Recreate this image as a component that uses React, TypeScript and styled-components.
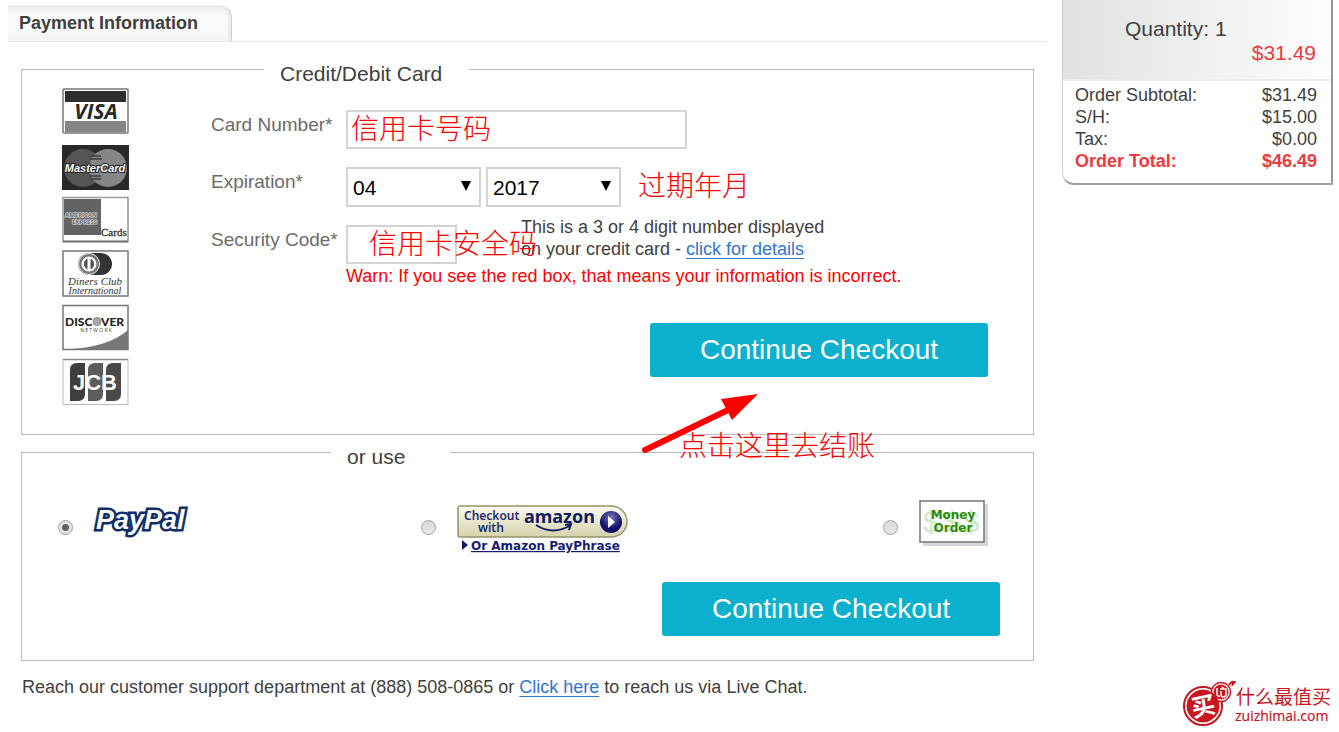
import React from "react";
import styled, { createGlobalStyle } from "styled-components";

const GlobalStyle = createGlobalStyle`
  *, *::before, *::after { box-sizing: border-box; }
  body {
    margin: 0;
    background: #fff;
    color: #3f3f3f;
    font-family: "Liberation Sans", Arial, "Noto Sans CJK SC", sans-serif;
    font-size: 18px;
    line-height: 22px;
  }
`;

const Columns = styled.div`
  display: flex;
  align-items: flex-start;
  gap: 15px;
  padding: 0 6px 0 8px;
`;

const Main = styled.main`
  flex: 1;
  min-width: 0;
`;

const TabBar = styled.header`
  padding-top: 5px;
  border-bottom: 1px solid #e8e8e8;
`;

const Tab = styled.h1`
  display: inline-block;
  vertical-align: top;
  margin: 0;
  padding: 7px 33px 7px 11px;
  border-top: 1px solid #ececec;
  border-right: 1px solid #d4d4d4;
  border-top-right-radius: 12px;
  background: linear-gradient(#efefef, #fafafa 30%, #fafafa 70%, #f4f4f4);
  box-shadow: inset -2px 1px 3px #e4e4e4;
  font-size: 18px;
  line-height: 21px;
`;

const Box = styled.fieldset<{ $top: number; $bottom: number }>`
  min-width: 0;
  margin: 0 13px;
  padding: ${(p) => p.$top}px 33px ${(p) => p.$bottom}px 40px;
  border: 1px solid #bcbcbc;
`;

const FirstBox = styled(Box)`
  margin-top: 10px;
  padding-right: 45px;
`;

const Legend = styled.legend<{ $offset: number; $end: number }>`
  margin-left: ${(p) => p.$offset}px;
  padding: 10px ${(p) => p.$end}px 0 16px;
  font-size: 21px;
  line-height: 24px;
`;

const CardLayout = styled.div`
  display: flex;
  gap: 82px;
`;

const CardList = styled.div`
  display: flex;
  flex-direction: column;
  gap: 6px;
  svg { display: block; }
`;

const Form = styled.form`
  flex: 1;
  min-width: 0;
  padding-top: 22px;
`;

const Row = styled.div`
  display: flex;
  align-items: flex-start;
  margin-bottom: 18px;
`;

const LastRow = styled(Row)`
  height: 40px;
  margin-bottom: 0;
`;

const Label = styled.label`
  flex: none;
  width: 135px;
  color: #6b6b6b;
  font-size: 19px;
  line-height: 30px;
  white-space: nowrap;
`;

const Field = styled.div<{ $width: number }>`
  position: relative;
  flex: none;
  width: ${(p) => p.$width}px;
`;

const TextBox = styled.input`
  display: block;
  width: 100%;
  height: 39px;
  padding: 0 8px;
  border: 2px solid #d4d4d4;
  font: inherit;
`;

const SelectField = styled(Field)`
  margin-right: 5px;
  svg {
    position: absolute;
    top: 14px;
    right: 10px;
    pointer-events: none;
  }
`;

const Select = styled.select`
  display: block;
  width: 100%;
  height: 40px;
  padding: 0 5px;
  border: 2px solid #d4d4d4;
  border-radius: 0;
  appearance: none;
  background: #fff;
  color: #000;
  font-family: inherit;
  font-size: 21px;
`;

const Note = styled.span`
  color: #f00;
  font-size: 28px;
  font-weight: 300;
  line-height: 40px;
  white-space: nowrap;
`;

const FloatingNote = styled(Note)<{ $left: number; $top: number }>`
  position: absolute;
  left: ${(p) => p.$left}px;
  top: ${(p) => p.$top}px;
  pointer-events: none;
`;

const SideNote = styled(Note)`
  height: 40px;
  margin-left: 12px;
`;

const Hint = styled.p`
  margin: -9px 0 0 64px;
`;

const Link = styled.a`
  color: #2f76d2;
  text-underline-offset: 3px;
`;

const Warning = styled.p`
  margin: 0 0 0 135px;
  color: #f00;
`;

const Actions = styled.div<{ $gap: number }>`
  display: flex;
  justify-content: flex-end;
  margin-top: ${(p) => p.$gap}px;
`;

const ButtonWrap = styled.div`
  position: relative;
`;

const CheckoutButton = styled.button`
  display: block;
  width: 338px;
  height: 54px;
  padding: 0;
  border: 0;
  border-radius: 3px;
  background: #0bb0ce;
  color: #fff;
  font-family: inherit;
  font-size: 28px;
`;

const Arrow = styled.svg`
  position: absolute;
  left: -10px;
  top: 67px;
  pointer-events: none;
`;

const Methods = styled.div`
  display: grid;
  grid-template-columns: 363fr 462fr 149fr;
  margin: 0 -32px 0 -4px;
`;

const Method = styled.label<{ $gap: number }>`
  display: flex;
  align-items: center;
  gap: ${(p) => p.$gap}px;
`;

const Radio = styled.input`
  flex: none;
  width: 15px;
  height: 15px;
  margin: 0;
  border: 1px solid #a2a2a2;
  border-radius: 50%;
  appearance: none;
  background: linear-gradient(#d8d8d8, #e8e8e8);
  &:checked {
    background: radial-gradient(circle, #606060 0 3px, #e2e2e2 4px);
  }
`;

const Summary = styled.aside`
  flex: none;
  width: 271px;
  border-left: 1px solid #cfd1d1;
  border-right: 2px solid #969696;
  border-bottom: 2px solid #a0a0a0;
  border-bottom-left-radius: 12px;
`;

const Quantity = styled.div`
  padding: 17px 15px 14px 62px;
  border-bottom: 2px solid #ececec;
  background: linear-gradient(90deg, #e0e2e2, #fdfdfd);
  font-size: 21px;
  line-height: 24px;
`;

const ItemPrice = styled.div`
  color: #ee3a3e;
  text-align: right;
`;

const Totals = styled.table`
  width: 100%;
  border-collapse: collapse;
  margin: 3px 0 11px;
  th, td { padding: 0 14px 0 12px; font-weight: inherit; line-height: 22px; }
  th { text-align: left; }
  td { text-align: right; }
`;

const TotalRow = styled.tr<{ $strong?: boolean }>`
  color: ${(p) => (p.$strong ? "#ee3a3e" : "inherit")};
  font-weight: ${(p) => (p.$strong ? 700 : 400)};
`;

const Footer = styled.footer`
  display: flex;
  justify-content: space-between;
  margin-top: 14px;
  padding: 0 7px 0 22px;
  svg { flex: none; margin-top: 3px; }
`;

const Support = styled.p`
  margin: 0;
  line-height: 24px;
`;

const sans = '"Open Sans", "Noto Sans", sans-serif';

const Visa = () => (
  <svg width="67" height="48" role="img" aria-label="Visa">
    <rect x="1" y="1" width="65" height="44" rx="1" fill="#fff" stroke="#777" strokeWidth="1.5" />
    <rect x="3" y="3" width="61" height="11" fill="#2e2c2e" />
    <rect x="3" y="33" width="61" height="11" fill="#858585" />
    <text x="34" y="31" textAnchor="middle" fontFamily={sans} fontSize="21" fontWeight="700" fontStyle="italic" fill="#292929">VISA</text>
  </svg>
);

const MasterCard = () => (
  <svg width="67" height="48" role="img" aria-label="MasterCard">
    <rect x="0" y="3" width="67" height="45" fill="#292929" />
    <circle cx="21" cy="26" r="19" fill="#555" />
    <circle cx="46" cy="26" r="19" fill="#868686" />
    <path d="M29 14h10M28 17h12M27 34h12M29 37h10" stroke="#3c3c3c" strokeWidth="1.5" />
    <text x="33" y="30" textAnchor="middle" fontFamily='"Liberation Sans", sans-serif' fontSize="11" fontWeight="700" fontStyle="italic" fill="#fff" stroke="#222" strokeWidth="2" paintOrder="stroke">MasterCard</text>
  </svg>
);

const Amex = () => (
  <svg width="67" height="48" role="img" aria-label="American Express Cards">
    <rect x="1" y="1.5" width="65" height="44" fill="#fff" stroke="#999" strokeWidth="1.5" />
    <path d="M1 45.5h65" stroke="#777" strokeWidth="2" />
    <rect x="2" y="3" width="37" height="36" fill="#636363" />
    <g fontFamily={sans} fontWeight="700" fontSize="6" fill="#666" stroke="#e0e0e0" strokeWidth="1.2" paintOrder="stroke">
      <text x="3" y="21">AMERICAN</text>
      <text x="10" y="28">EXPRESS</text>
    </g>
    <text x="39" y="40" fontFamily="Liberation Serif, serif" fontSize="11" fill="#333" stroke="#333" strokeWidth=".3">Cards</text>
  </svg>
);

const Diners = () => (
  <svg width="67" height="48" role="img" aria-label="Diners Club International">
    <rect x="1" y="1" width="65" height="45" fill="#fff" stroke="#777" strokeWidth="1.5" />
    <rect x="16" y="3" width="34" height="22" rx="11" fill="#333" />
    <circle cx="27" cy="14" r="10.5" fill="#777" stroke="#eee" />
    <circle cx="27" cy="14" r="7.5" fill="#fff" />
    <path d="M25.500 8.500a6 6 0 0 0 0 11zM28.500 8.500a6 6 0 0 1 0 11z" fill="#555" />
    <g fontFamily="Liberation Serif, serif" fontStyle="italic" textAnchor="middle" fill="#333">
      <text x="33" y="35" fontSize="11">Diners Club</text>
      <text x="33" y="44" fontSize="10">International</text>
    </g>
  </svg>
);

const Discover = () => (
  <svg width="67" height="48" role="img" aria-label="Discover Network">
    <rect x="1" y="1.5" width="65" height="44" fill="#fff" stroke="#777" strokeWidth="1.5" />
    <path d="M9 45Q46 43 66 26v19z" fill="#777" />
    <g fontFamily="Lato, sans-serif" fontWeight="900" fontSize="12" fill="#252525">
      <text x="3" y="22">DISC</text>
      <text x="39" y="22">VER</text>
    </g>
    <circle cx="35" cy="17.5" r="4" fill="#aaa" stroke="#888" />
    <text x="34" y="28" textAnchor="middle" fontFamily={sans} fontSize="5" fill="#444">N E T W O R K</text>
  </svg>
);

const Jcb = () => (
  <svg width="67" height="48" role="img" aria-label="JCB">
    <rect x="1" y="1.5" width="65" height="45" fill="#fff" stroke="#bbb" />
    <path d="M1 1.5h65" stroke="#888" strokeWidth="1.5" />
    <path d="M8 12q0-7 7-7h8v31q0 7-7 7H8z" fill="#3e3e3e" />
    <path d="M26 12q0-7 7-7h8v31q0 7-7 7h-8z" fill="#5c5c5c" />
    <path d="M44 12q0-7 7-7h8v31q0 7-7 7h-8z" fill="#4a4a4a" />
    <text x="33" y="32" textAnchor="middle" fontFamily="Liberation Sans, sans-serif" fontSize="22" fontWeight="700" fill="#fff">JCB</text>
  </svg>
);

const PayPal = () => (
  <svg width="96" height="54" role="img" aria-label="PayPal">
    <text x="3" y="29" fontFamily='"Liberation Sans", sans-serif' fontSize="27" fontWeight="700" fontStyle="italic" fill="#fff" stroke="#112e6b" strokeWidth="5" strokeLinejoin="miter" paintOrder="stroke">PayPal</text>
  </svg>
);

const Amazon = () => (
  <svg width="172" height="54" role="img" aria-label="Checkout with Amazon">
    <defs>
      <linearGradient id="cream" x1="0" y1="0" x2="0" y2="1">
        <stop offset="0" stopColor="#fbfaf0" />
        <stop offset="1" stopColor="#d6d2ac" />
      </linearGradient>
      <radialGradient id="navy" cx=".5" cy=".3">
        <stop offset="0" stopColor="#7879b8" />
        <stop offset="1" stopColor="#11116a" />
      </radialGradient>
    </defs>
    <path d="M3 6h151a16 15.500 0 0 1 0 31H3q-2 0-2-2V8q0-2 2-2z" fill="url(#cream)" stroke="#96946a" strokeWidth="1.500" />
    <g fontFamily='"Noto Sans", sans-serif' fontWeight="600" fill="#1d2c76">
      <text x="7" y="20" fontSize="12">Checkout</text>
      <text x="21" y="32" fontSize="12">with</text>
      <text x="67" y="23" fontSize="18" fontWeight="700" fill="#131c62">amazon</text>
    </g>
    <path d="M79 25q17 11 35 0M108 25l6-1-2 6" fill="none" stroke="#131c62" strokeWidth="2" />
    <circle cx="154" cy="22" r="11" fill="url(#navy)" />
    <path d="M151 16l7 6-7 6z" fill="#fff" />
    <path d="M5 40l6 5-6 5z" fill="#11116a" />
    <text x="14" y="50" fontFamily="DejaVu Sans, sans-serif" fontSize="12" fontWeight="700" fill="#161d75" textDecoration="underline">Or Amazon PayPhrase</text>
  </svg>
);

const MoneyOrder = () => (
  <svg width="70" height="54" role="img" aria-label="Money Order">
    <rect x="4" y="4" width="65" height="42" fill="#d3d6dd" />
    <rect x="1" y="1" width="64" height="41" fill="#fff" stroke="#777" strokeWidth="1.500" />
    <g fontFamily="Liberation Sans, sans-serif" fontSize="29" fill="#cde9c5">
      <text x="4" y="32">$</text>
      <text x="25" y="32">$</text>
      <text x="44" y="32">$</text>
    </g>
    <g fontFamily="DejaVu Sans, sans-serif" fontSize="12" fontWeight="700" textAnchor="middle" fill="#2b8c0b">
      <text x="34" y="19">Money</text>
      <text x="34" y="32">Order</text>
    </g>
  </svg>
);

const SiteLogo = () => (
  <svg width="150" height="52" role="img" aria-label="什么最值买 zuizhimai.com">
    <g fill="none" stroke="#c9151e">
      <circle cx="21" cy="28" r="19" strokeWidth="2" fill="#fff" />
      <circle cx="39" cy="14" r="9.500" strokeWidth="1.500" fill="#fff" />
      <circle cx="21" cy="28" r="16" fill="#c9151e" />
      <circle cx="39" cy="14" r="7" fill="#c9151e" />
      <path d="M47 7q5-6 4-1 2-2 2-3" strokeWidth="2" />
      <path d="M35 10v6q0 3 3 2M38 11h6v5q0 3-3 3-2 0-2-3v-3M40 9l2 2" stroke="#fff" strokeWidth="1.500" />
    </g>
    <text x="21" y="37" textAnchor="middle" fontFamily="Noto Sans CJK SC, sans-serif" fontSize="24" fontWeight="700" fill="#fff" transform="rotate(-12 21 28)">买</text>
    <text x="54" y="26" fontFamily="Noto Sans CJK SC, sans-serif" fontSize="19" fill="#c9151e">什么最值买</text>
    <text x="53" y="43" fontFamily={sans} fontSize="14" fill="#c9151e" stroke="#c9151e" strokeWidth=".2">zuizhimai.com</text>
  </svg>
);

const Caret = () => (
  <svg width="10" height="10" aria-hidden="true">
    <path d="M0 0h10L5 10z" fill="#000" />
  </svg>
);

const totals = [
  { name: "Order Subtotal:", value: "$31.49" },
  { name: "S/H:", value: "$15.00" },
  { name: "Tax:", value: "$0.00" },
  { name: "Order Total:", value: "$46.49", strong: true },
];

const methods = [
  { id: "paypal", Logo: PayPal, gap: 20 },
  { id: "amazon", Logo: Amazon, gap: 21 },
  { id: "money-order", Logo: MoneyOrder, gap: 21 },
];

export default function App() {
  return (
    <>
      <GlobalStyle />
      <Columns>
        <Main>
          <TabBar>
            <Tab>Payment Information</Tab>
          </TabBar>
          <FirstBox $top={2} $bottom={28}>
            <Legend $offset={202} $end={27}>Credit/Debit Card</Legend>
            <CardLayout>
              <CardList>
                <Visa />
                <MasterCard />
                <Amex />
                <Diners />
                <Discover />
                <Jcb />
              </CardList>
              <Form onSubmit={(e) => e.preventDefault()}>
                <Row>
                  <Label htmlFor="number">Card Number*</Label>
                  <Field $width={341}>
                    <TextBox id="number" />
                    <FloatingNote $left={5} $top={0}>信用卡号码</FloatingNote>
                  </Field>
                </Row>
                <Row>
                  <Label htmlFor="month">Expiration*</Label>
                  <SelectField $width={135}>
                    <Select id="month" defaultValue="04">
                      <option>04</option>
                    </Select>
                    <Caret />
                  </SelectField>
                  <SelectField $width={135}>
                    <Select aria-label="Expiration year" defaultValue="2017">
                      <option>2017</option>
                    </Select>
                    <Caret />
                  </SelectField>
                  <SideNote>过期年月</SideNote>
                </Row>
                <LastRow>
                  <Label htmlFor="code">Security Code*</Label>
                  <Field $width={111}>
                    <TextBox id="code" />
                    <FloatingNote $left={23} $top={0}>信用卡安全码</FloatingNote>
                  </Field>
                  <Hint>
                    This is a 3 or 4 digit number displayed
                    <br />
                    on your credit card - <Link href="#details">click for details</Link>
                  </Hint>
                </LastRow>
                <Warning>Warn: If you see the red box, that means your information is incorrect.</Warning>
                <Actions $gap={36}>
                  <ButtonWrap>
                    <CheckoutButton type="submit">Continue Checkout</CheckoutButton>
                    <Arrow width="122" height="66" aria-hidden="true">
                      <path d="M5 60L88 20" stroke="#f00" strokeWidth="6" strokeLinecap="round" />
                      <path d="M118 4L81 9l11 21z" fill="#f00" />
                    </Arrow>
                    <FloatingNote $left={29} $top={104}>点击这里去结账</FloatingNote>
                  </ButtonWrap>
                </Actions>
              </Form>
            </CardLayout>
          </FirstBox>
          <Box $top={31} $bottom={24}>
            <Legend $offset={269} $end={45}>or use</Legend>
            <Methods>
              {methods.map(({ id, Logo, gap }) => (
                <Method key={id} $gap={gap}>
                  <Radio type="radio" name="method" value={id} defaultChecked={id === "paypal"} />
                  <Logo />
                </Method>
              ))}
            </Methods>
            <Actions $gap={28}>
              <CheckoutButton type="button">Continue Checkout</CheckoutButton>
            </Actions>
          </Box>
        </Main>
        <Summary>
          <Quantity>
            <div>Quantity: 1</div>
            <ItemPrice>$31.49</ItemPrice>
          </Quantity>
          <Totals>
            <tbody>
              {totals.map((t) => (
                <TotalRow key={t.name} $strong={t.strong}>
                  <th scope="row">{t.name}</th>
                  <td>{t.value}</td>
                </TotalRow>
              ))}
            </tbody>
          </Totals>
        </Summary>
      </Columns>
      <Footer>
        <Support>
          Reach our customer support department at (888) 508-0865 or <Link href="#chat">Click here</Link> to reach us via Live Chat.
        </Support>
        <SiteLogo />
      </Footer>
    </>
  );
}
